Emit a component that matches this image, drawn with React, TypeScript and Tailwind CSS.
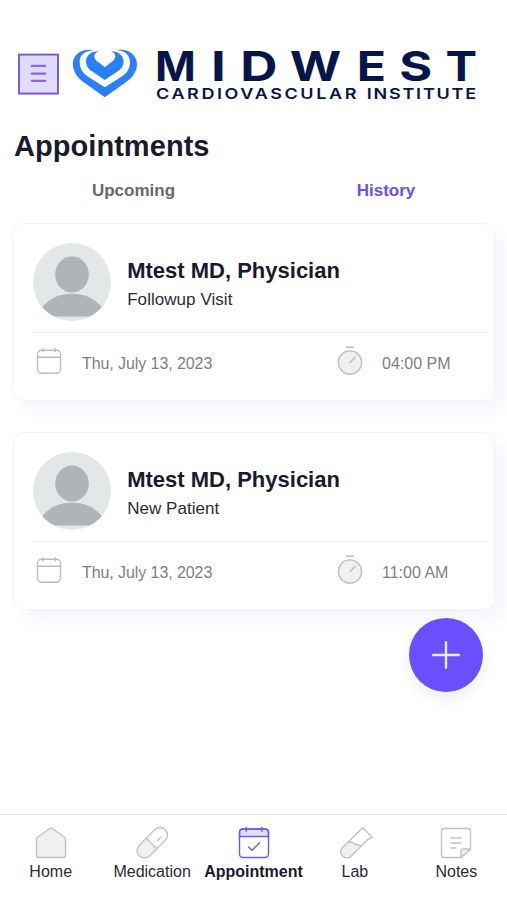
import type { ReactNode } from "react";

const wordmark: { ch: string; x: number; w: number }[] = [
  { ch: "M", x: 155, w: 40.8 },
  { ch: "I", x: 211, w: 14.8 },
  { ch: "D", x: 240.3, w: 37.2 },
  { ch: "W", x: 289.8, w: 51.4 },
  { ch: "E", x: 356.8, w: 29.2 },
  { ch: "S", x: 399.2, w: 33 },
  { ch: "T", x: 445.6, w: 31.6 },
];

function Logo() {
  return (
    <svg className="block h-[76px] w-[412px] shrink-0" viewBox="70 34 412 76" role="img" aria-label="Midwest Cardiovascular Institute">
      <g fill="#2a80fc">
        <path d="M93 50.3C82 48 73 55 72.8 63.5C72.8 71 77 77.5 84 82.5L104.8 97.2L125.5 82.5C133 77.3 137 71 137 63.5C136.6 55 127.5 48 117 50.3C125 50.3 130 55.5 130 62C130 68.5 127 73 121 77L104.8 87.3L88.5 77C82.5 73 79.7 68.5 79.7 62C79.7 55.5 84 51 93 50.3Z" />
        <path d="M98.8 51.2C91 51 86 55.8 86 61.5C86 66 88.5 69 92 71.3L104.8 80L117.7 71.3C121 69 123.6 66 123.6 61.5C123.6 55.8 118.5 51 111 51.2C115 52.6 116 55.5 115 58C114.2 60.2 112.5 61.4 110.5 62.8L104.8 67.2L99.2 62.8C97 61.4 95.5 60.2 94.7 58C93.8 55.5 94.8 52.6 98.8 51.2Z" />
      </g>
      <g fill="#06164a" fontFamily="Inter, sans-serif">
        {wordmark.map((l) => (
          <text key={l.ch} x={l.x} y="80.6" fontSize="41.3" fontWeight="700" textLength={l.w} lengthAdjust="spacingAndGlyphs">
            {l.ch}
          </text>
        ))}
        <g transform="scale(1.2 1)" fontSize="15" fontWeight="600">
          <text x="130" y="98.9" textLength="167">CARDIOVASCULAR</text>
          <text x="305.6" y="98.9" textLength="91.2">INSTITUTE</text>
        </g>
      </g>
    </svg>
  );
}

function MenuIcon() {
  return (
    <svg className="block h-[42px] w-[42px] shrink-0" viewBox="0 0 42 42" fill="none" stroke="#7455e6">
      <rect x="1" y="1.6" width="39" height="39" fill="#e2dcfc" strokeWidth="1.9" />
      <path d="M13.8 12.9H27.2M13.8 20.7H27.2M13.8 27.8H27.2" strokeWidth="2.2" strokeLinecap="round" stroke="#8268ea" />
    </svg>
  );
}

function Avatar() {
  return (
    <svg className="block h-[78px] w-[78px] shrink-0" viewBox="0 0 78 78">
      <defs>
        <clipPath id="avatar-clip">
          <circle cx="39" cy="39" r="39" />
        </clipPath>
      </defs>
      <g clipPath="url(#avatar-clip)">
        <rect width="78" height="78" fill="#e3e7e8" />
        <ellipse cx="39" cy="31.5" rx="16.8" ry="18" fill="#aeb4b7" />
        <path d="M4 73.5C10 59 22 50.8 39 50.8S68 59 74 73.5Z" fill="#aeb4b7" />
      </g>
    </svg>
  );
}

function CalendarIcon() {
  return (
    <svg className="block h-[30px] w-[30px]" viewBox="0 0 30 30" fill="none" stroke="#bcbcc0" strokeWidth="1.4">
      <rect x="3.5" y="4.2" width="23" height="23" rx="4" />
      <path d="M3.5 11.3H26.5M8.8 2.3V6.2M21.3 2.3V6.2" />
    </svg>
  );
}

function TimerIcon() {
  return (
    <svg className="block h-[34px] w-[30px]" viewBox="0 0 30 34" fill="none" stroke="#bcbcc0" strokeWidth="1.4">
      <circle cx="15" cy="19.5" r="11.6" fill="#f0f0f2" />
      <path d="M11.5 4.3H18.5M15 19.5L20 14.5" strokeLinecap="round" />
    </svg>
  );
}

function AppointmentCard({ visit, time }: { visit: string; time: string }) {
  return (
    <article className="flex h-[178px] flex-col rounded-xl border border-[#f4f4f6] bg-white pl-[18px] pr-[6px] pt-[18.5px] shadow-[10px_11px_14px_rgba(90,80,200,0.06)]">
      <div className="flex h-[90.5px] items-start border-b border-[#f2f2f3]">
        <div className="pl-[0.7px]"><Avatar /></div>
        <div className="ml-[16.5px] pt-[14.5px]">
          <h2 className="text-[22px] leading-[28px] font-bold whitespace-nowrap text-[#1a1a2e]">Mtest MD, Physician</h2>
          <p className="pt-[3px] text-[17px] leading-6 tracking-[0.05px] text-[#2b2b3a]">{visit}</p>
        </div>
      </div>
      <div className="flex pt-[12px] text-[16px] leading-6 text-[#808080]">
        <div className="flex w-[303px]">
          <div className="ml-[2px] w-[48px] pt-px"><CalendarIcon /></div>
          <span className="pt-[7px] tracking-[-0.08px]">Thu, July 13, 2023</span>
        </div>
        <div className="-mt-[2.5px] w-[47px]"><TimerIcon /></div>
        <span className="pt-[7px]">{time}</span>
      </div>
    </article>
  );
}

function NavItem({ label, active, children }: { label: string; active?: boolean; children: ReactNode }) {
  return (
    <button className="flex min-w-0 flex-1 flex-col items-center">
      <svg
        className={active ? "block h-[36px] w-[36px] text-[#7157f6]" : "block h-[36px] w-[36px] text-[#c2c2c6]"}
        viewBox="0 0 36 36" fill="none" stroke="currentColor" strokeWidth="1.4" strokeLinejoin="round" strokeLinecap="round"
      >
        {children}
      </svg>
      <span className={active ? "pt-px text-[16px] leading-5 font-bold text-[#1a1a2e]" : "pt-px text-[16px] leading-5 text-[#2b2b38]"}>{label}</span>
    </button>
  );
}

export default function App() {
  return (
    <div className="relative flex h-[900px] w-[507px] flex-col overflow-hidden bg-white font-['Liberation_Sans',sans-serif]">
      <header className="flex pt-[34px] pl-[17px]">
        <div className="mr-[11px] pt-[19px] pl-[0.5px]"><MenuIcon /></div>
        <div className="-ml-[0.5px]"><Logo /></div>
      </header>
      <h1 className="mt-[18px] pl-[14px] text-[29px] leading-[36px] font-bold tracking-[0.05px] text-[#1a1a2e]">Appointments</h1>
      <nav className="mt-[14px] grid h-[26px] grid-cols-2 pl-[13px] text-center text-[17px] leading-[26px] font-bold">
        <span className="pr-[6px] text-[#696969]">Upcoming</span>
        <span className="pl-[5px] text-[#6a50f2]">History</span>
      </nav>
      <main className="flex flex-1 flex-col gap-[31px] pt-[19px] pr-[12px] pl-[13px]">
        <AppointmentCard visit="Followup Visit" time="04:00 PM" />
        <AppointmentCard visit="New Patient" time="11:00 AM" />
      </main>
      <button aria-label="Add appointment" className="absolute top-[618px] left-[409px] flex size-[74px] items-center justify-center rounded-full bg-[#694ffd] shadow-[0_7px_16px_rgba(0,0,0,0.07)]">
        <svg className="size-[30px]" viewBox="0 0 30 30" stroke="#eeeaff" strokeWidth="2.4" strokeLinecap="round">
          <path d="M15 2.2V27.8M2.2 15H27.8" />
        </svg>
      </button>
      <footer className="flex h-[86px] border-t border-[#e6e6e8] pt-[10px]">
        <NavItem label="Home">
          <path d="M3.5 14.2Q3.5 13 4.5 12.2L17 3.3Q18 2.6 19 3.3L31.5 12.2Q32.5 13 32.5 14.2V30.5Q32.5 32.5 30.5 32.5H5.5Q3.5 32.5 3.5 30.5Z" fill="#f0f0f3" />
        </NavItem>
        <NavItem label="Medication">
          <path d="M12.3 13.2L22.8 23.7L15.7 30.8A7.42 7.42 0 0 1 5.2 20.3Z" fill="#f0f0f3" />
          <path d="M12.3 13.2L20.8 4.7A7.42 7.42 0 0 1 31.3 15.2L22.8 23.7M23.5 15.5L27 12" />
        </NavItem>
        <NavItem label="Appointment" active>
          <path d="M3.5 11.5V7.5Q3.5 4 7 4H29Q32.5 4 32.5 7.5V11.5Z" fill="#e5dffd" />
          <rect x="3.5" y="4" width="29" height="28.5" rx="3.5" />
          <path d="M10.2 2.5V6.5M25.8 2.5V6.5M12.5 22L16.2 25.2L23.5 17.8" />
        </NavItem>
        <NavItem label="Lab">
          <path d="M11.2 17.2Q13.8 16.6 16.5 18.3T23.8 20.2L13.2 31.2A6.5 6.5 0 0 1 4.3 24.2Z" fill="#f0f0f3" stroke="none" />
          <path d="M25.7 2.8L4.8 23.3A6.2 6.2 0 0 0 13.5 31.7L30.3 14.9Q31.5 13.7 35.4 12.4ZM11.2 17.2Q13.8 16.6 16.5 18.3T24.2 20.6" />
        </NavItem>
        <NavItem label="Notes">
          <path d="M32.5 24V6Q32.5 3.5 30 3.5H6Q3.5 3.5 3.5 6V30Q3.5 32.5 6 32.5H23Z" />
          <path d="M23 32.5V26Q23 24 25 24H32.5Z" fill="#eeeef1" />
          <path d="M13 13H23M13 18H23M13 23H18" />
        </NavItem>
      </footer>
    </div>
  );
}
